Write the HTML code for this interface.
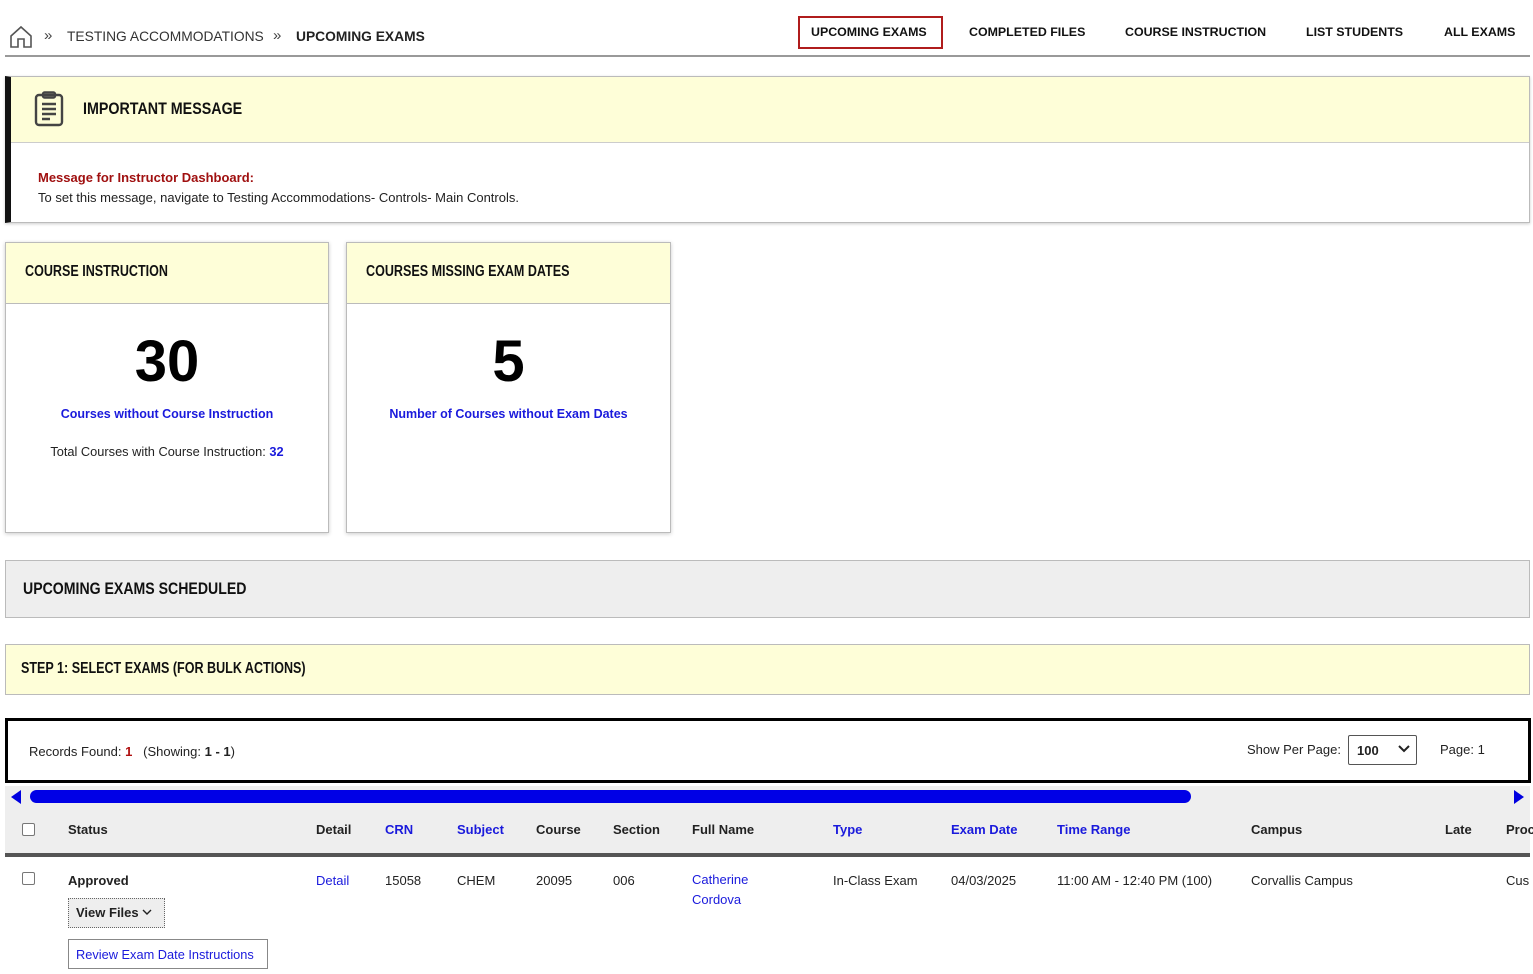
<!DOCTYPE html>
<html><head><meta charset="utf-8"><style>
*{box-sizing:border-box;margin:0;padding:0}
body{width:1533px;height:974px;overflow:hidden;background:#fff;font-family:"Liberation Sans",sans-serif;font-size:14px;color:#222;position:relative}
.a{position:absolute;white-space:nowrap}
.cond{font-weight:bold;color:#111;transform:scaleX(0.82);transform-origin:left center}
.nav{font-size:12.4px;font-weight:bold;color:#111;top:25px}
.blue{color:#1a1adc}
.hd{font-weight:bold;font-size:13px;top:822px}
.td{font-size:13px;top:873px}
</style></head><body>
<svg class="a" style="left:9px;top:25px" width="24" height="24" viewBox="0 0 24 24" fill="none" stroke="#555" stroke-width="1.6"><path d="M2 11 L12 2 L22 11 V22 H15 V14 H9 V22 H2 Z"/></svg>
<div class="a" style="left:44px;top:27px;font-size:15px;color:#444">»</div>
<div class="a" style="left:67px;top:29px;font-size:13.8px;color:#333">TESTING ACCOMMODATIONS</div>
<div class="a" style="left:273px;top:27px;font-size:15px;color:#444">»</div>
<div class="a" style="left:296px;top:29px;font-size:13.8px;font-weight:bold;color:#222">UPCOMING EXAMS</div>
<div class="a" style="left:798px;top:16px;width:145px;height:33px;border:2px solid #b01c1c"></div>
<div class="a nav" style="left:811px">UPCOMING EXAMS</div>
<div class="a nav" style="left:969px">COMPLETED FILES</div>
<div class="a nav" style="left:1125px">COURSE INSTRUCTION</div>
<div class="a nav" style="left:1306px">LIST STUDENTS</div>
<div class="a nav" style="left:1444px">ALL EXAMS</div>
<div class="a" style="left:5px;top:55px;width:1525px;height:2px;background:#999"></div>

<div class="a" style="left:5px;top:76px;width:1525px;height:147px;border:1px solid #bbb;border-left:6px solid #111;box-shadow:0 1px 3px rgba(0,0,0,.2)">
 <div style="height:66px;background:#fefed8;border-bottom:1px solid #ccc"></div>
</div>
<svg class="a" style="left:33px;top:91px" width="32" height="36" viewBox="0 0 32 36" fill="none" stroke="#444" stroke-width="2.4"><rect x="3" y="4" width="26" height="30" rx="3"/><rect x="10" y="1.5" width="12" height="5" rx="1.5"/><path d="M9 13h14M9 18h14M9 23h14M9 28h8"/></svg>
<div class="a cond" style="left:83px;top:99px;font-size:17px;transform:scaleX(0.84)">IMPORTANT MESSAGE</div>
<div class="a" style="left:38px;top:170px;font-size:13px;font-weight:bold;color:#a01010">Message for Instructor Dashboard:</div>
<div class="a" style="left:38px;top:190px;font-size:13px;color:#222">To set this message, navigate to Testing Accommodations- Controls- Main Controls.</div>

<div class="a" style="left:5px;top:242px;width:324px;height:291px;border:1px solid #bbb;box-shadow:0 1px 4px rgba(0,0,0,.2)"><div style="height:61px;background:#fefed8;border-bottom:1px solid #bbb"></div></div>
<div class="a cond" style="left:25px;top:263px;font-size:15.5px;transform:scaleX(0.81)">COURSE INSTRUCTION</div>
<div class="a" style="left:5px;top:328px;width:324px;text-align:center;font-size:58px;font-weight:bold;color:#000">30</div>
<div class="a blue" style="left:5px;top:407px;width:324px;text-align:center;font-size:12.5px;font-weight:bold">Courses without Course Instruction</div>
<div class="a" style="left:5px;top:444px;width:324px;text-align:center;font-size:12.8px">Total Courses with Course Instruction: <b class="blue">32</b></div>

<div class="a" style="left:346px;top:242px;width:325px;height:291px;border:1px solid #bbb;box-shadow:0 1px 4px rgba(0,0,0,.2)"><div style="height:61px;background:#fefed8;border-bottom:1px solid #bbb"></div></div>
<div class="a cond" style="left:366px;top:263px;font-size:15.5px;transform:scaleX(0.81)">COURSES MISSING EXAM DATES</div>
<div class="a" style="left:346px;top:328px;width:325px;text-align:center;font-size:58px;font-weight:bold;color:#000">5</div>
<div class="a blue" style="left:346px;top:407px;width:325px;text-align:center;font-size:12.5px;font-weight:bold">Number of Courses without Exam Dates</div>

<div class="a" style="left:5px;top:560px;width:1525px;height:58px;background:#eee;border:1px solid #bbb"></div>
<div class="a cond" style="left:23px;top:579px;font-size:17px;transform:scaleX(0.83)">UPCOMING EXAMS SCHEDULED</div>
<div class="a" style="left:5px;top:644px;width:1525px;height:51px;background:#fefed8;border:1px solid #bbb"></div>
<div class="a cond" style="left:21px;top:660px;font-size:15.5px;transform:scaleX(0.81)">STEP 1: SELECT EXAMS (FOR BULK ACTIONS)</div>

<div class="a" style="left:5px;top:718px;width:1526px;height:65px;border:3px solid #000"></div>
<div class="a" style="left:29px;top:744px;font-size:13px">Records Found: <b style="color:#b01010">1</b> &nbsp; (Showing: <b>1 - 1</b>)</div>
<div class="a" style="left:1247px;top:742px;font-size:13px">Show Per Page:</div>
<div class="a" style="left:1348px;top:735px;width:69px;height:30px;border:1px solid #555;border-radius:2px;font-size:13px;font-weight:bold;padding:7px 8px">100</div>
<svg class="a" style="left:1398px;top:745px" width="12" height="8"><path d="M1 1l5 5 5-5" stroke="#222" stroke-width="2" fill="none"/></svg>
<div class="a" style="left:1440px;top:742px;font-size:13px">Page: 1</div>

<div class="a" style="left:5px;top:786px;width:1525px;height:68px;background:#eee"></div>
<svg class="a" style="left:10px;top:790px" width="12" height="14"><path d="M11 0 L1 7 L11 14Z" fill="#0000e0"/></svg>
<div class="a" style="left:30px;top:790px;width:1161px;height:13px;background:#0000e6;border-radius:7px"></div>
<svg class="a" style="left:1513px;top:790px" width="12" height="14"><path d="M1 0 L11 7 L1 14Z" fill="#0000e0"/></svg>
<div class="a" style="left:22px;top:823px;width:13px;height:13px;border:1px solid #777;border-radius:2px;background:#fff"></div>
<div class="a hd" style="left:68px">Status</div>
<div class="a hd" style="left:316px">Detail</div>
<div class="a hd blue" style="left:385px">CRN</div>
<div class="a hd blue" style="left:457px">Subject</div>
<div class="a hd" style="left:536px">Course</div>
<div class="a hd" style="left:613px">Section</div>
<div class="a hd" style="left:692px">Full Name</div>
<div class="a hd blue" style="left:833px">Type</div>
<div class="a hd blue" style="left:951px">Exam Date</div>
<div class="a hd blue" style="left:1057px">Time Range</div>
<div class="a hd" style="left:1251px">Campus</div>
<div class="a hd" style="left:1445px">Late</div>
<div class="a hd" style="left:1506px">Proc</div>
<div class="a" style="left:5px;top:853px;width:1525px;height:4px;background:#555"></div>

<div class="a" style="left:22px;top:872px;width:13px;height:13px;border:1px solid #777;border-radius:2px"></div>
<div class="a td" style="left:68px;font-weight:bold">Approved</div>
<div class="a td blue" style="left:316px">Detail</div>
<div class="a td" style="left:385px">15058</div>
<div class="a td" style="left:457px">CHEM</div>
<div class="a td" style="left:536px">20095</div>
<div class="a td" style="left:613px">006</div>
<div class="a td blue" style="left:692px;line-height:20px;top:870px;white-space:normal;width:80px">Catherine Cordova</div>
<div class="a td" style="left:833px">In-Class Exam</div>
<div class="a td" style="left:951px">04/03/2025</div>
<div class="a td" style="left:1057px">11:00 AM - 12:40 PM (100)</div>
<div class="a td" style="left:1251px">Corvallis Campus</div>
<div class="a td" style="left:1506px">Cus</div>
<div class="a" style="left:68px;top:898px;width:97px;height:30px;border:1px dotted #666;background:#eee;font-size:13px;font-weight:bold;padding:6px 7px">View Files</div>
<svg class="a" style="left:142px;top:909px" width="10" height="7"><path d="M1 1l4 4 4-4" stroke="#222" stroke-width="1.4" fill="none"/></svg>
<div class="a blue" style="left:68px;top:939px;width:200px;height:30px;border:1px solid #888;font-size:12.8px;padding:7px 7px">Review Exam Date Instructions</div>
</body></html>
